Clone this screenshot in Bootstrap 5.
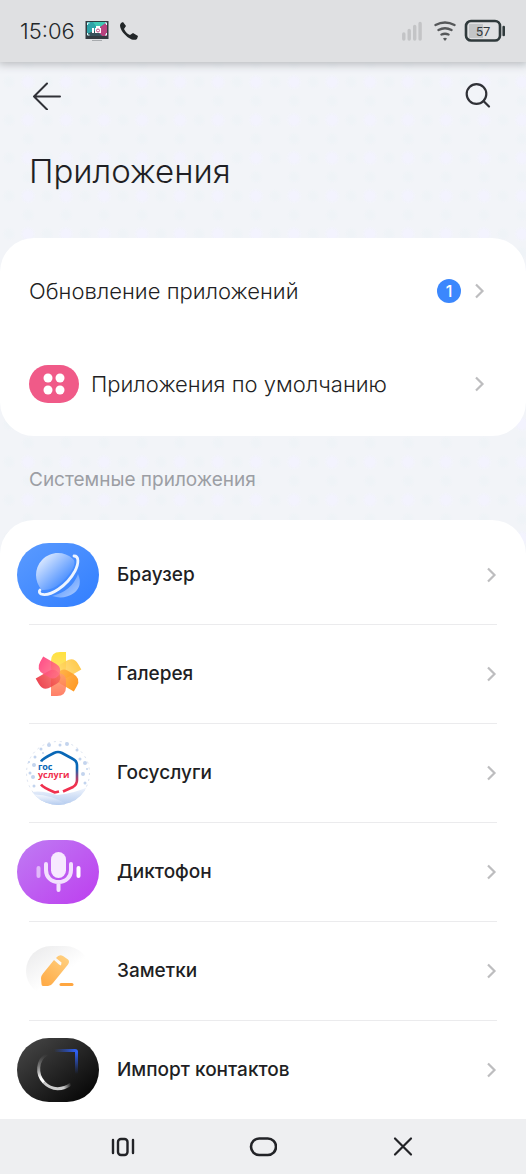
<!DOCTYPE html>
<html lang="ru">
<head>
<meta charset="utf-8">
<meta name="viewport" content="width=device-width, initial-scale=1">
<title>Приложения</title>
<link href="https://cdn.jsdelivr.net/npm/bootstrap@5.3.0/dist/css/bootstrap.min.css" rel="stylesheet">
<style>
  body {
    font-family: Inter, Roboto, "Liberation Sans", sans-serif;
    color: #1f1f24;
    background-color: #f2f4f8;
    background-image:
      radial-gradient(circle, #f3f3fe 4px, transparent 8px),
      radial-gradient(circle, #eff3f7 3px, transparent 7px),
      radial-gradient(circle, #eff3f7 3px, transparent 7px);
    background-size: 38px 38px;
    background-position: 9px 63px, 9px 82px, 28px 63px;
  }
  svg { display: block; flex-shrink: 0; }
  a { color: inherit; text-decoration: none; }
  button { background: none; border: 0; padding: 0; color: inherit; }
  .status-bar { height: 62px; padding: 0 20px; background: #dfe0e2; box-shadow: 0 0 9px 2px #b4b6b9; }
  .clock { font-size: 22px; line-height: 28px; font-weight: 300; color: #24282a; margin-right: 2px; }
  .top-bar { padding: 20px 34px 0 32px; }
  .page-title { font-size: 33px; line-height: 44px; font-weight: 300; padding: 0 29px; margin: 39px 0 45px; }
  .panel { background: #fff; border-radius: 34px; }
  .links { padding: 6px 0; }
  .panel-row { height: 93px; padding: 0 40px 0 29px; font-size: 22px; line-height: 28px; font-weight: 300; }
  .count { width: 24px; height: 24px; border-radius: 12px; background: #3b87fd; color: #fff; font-size: 16px; line-height: 24px; font-weight: 500; margin-right: 13px; }
  .section-label { font-size: 19px; line-height: 28px; font-weight: 400; color: #9c9ea4; padding: 0 29px; margin: 30px 0 26px; }
  .apps { border-radius: 34px 34px 0 0; padding: 6px 29px 0; }
  .app-item + .app-item { border-top: 1px solid #ebebed; }
  .app-row { height: 98px; font-size: 19px; line-height: 28px; font-weight: 500; }
  .app-icon { margin: 0 18px 0 -12px; }
  .nav-keys { height: 55px; background: #eeeff1; padding: 0 53px; color: #222327; }
</style>
</head>
<body>
<div class="d-flex flex-column min-vh-100">
  <header class="status-bar d-flex align-items-center">
    <span class="clock">15:06</span>
    <svg class="ms-2" width="24" height="22" viewBox="0 0 24 22" aria-hidden="true">
      <rect x=".5" y="1" width="23" height="18" fill="#333a40"/>
      <path d="M2 2h20v14H2z" fill="#2fa3a8"/><path d="M8 2h14l-9 7z" fill="#40c8b4"/>
      <path d="M22 2v14h-5l-6-6z" fill="#b8437f"/><path d="M2 14l9-4 6 6H2z" fill="#37515a"/>
      <path d="M2.500 5V3h2M20 3h1.500v2M2.500 13v2h2M20 15h1.500v-2" stroke="#dff" fill="none"/>
      <path d="M7 8h2v5H7zM10 8h1V6h4v2h1v5h-6z" fill="#fff"/><circle cx="13" cy="10.500" r="1.500" fill="none" stroke="#c54884"/>
      <path d="M7 20.500h10" stroke="#a8abae"/>
    </svg>
    <svg class="ms-2" width="24" height="22" viewBox="0 0 24 22" aria-hidden="true"><path d="M4 3l2-1 3 4-2 3c2 4 4 5 6 6l3-2 5 3-1 3c-2 1.500-5 1-8-1C8 15.500 3 10 3 5z" fill="#222628"/></svg>
    <svg class="ms-auto" width="20" height="22" viewBox="0 0 20 22" stroke="#c3c4c6" stroke-width="3.400" stroke-linecap="round" aria-hidden="true"><path d="M1.800 14V19M7.200 10.500V19M12.700 6.500V19M18.100 3.500V19"/></svg>
    <svg class="ms-2 me-1" width="30" height="24" viewBox="0 0 30 24" fill="none" stroke="#56585a" stroke-width="2.400" stroke-linecap="round" aria-hidden="true"><path d="M5.500 6q9.500-5 19 0M8.500 11q6.500-3.500 13 0M11.500 15.500q3.500-1.500 7 0"/><path d="M13 19.500q2-1.500 4 0L15 22z" fill="#56585a" stroke="none"/></svg>
    <svg width="42" height="24" viewBox="0 0 42 24" aria-label="57%"><rect x="2" y="2" width="34" height="19.500" rx="5" fill="#e0e1e3" stroke="#303a3c" stroke-width="2.600"/><path d="M5 5h14v14H5z" fill="#c3c5c7"/><path d="M39.700 8v8" stroke="#303a3c" stroke-width="2.600" stroke-linecap="round"/><text x="19" y="16.500" text-anchor="middle" font-family="Roboto" font-size="13" font-weight="400" fill="#333a3d">57</text></svg>
  </header>

  <nav class="top-bar d-flex justify-content-between align-items-center" aria-label="Верхняя панель">
    <button type="button" aria-label="Назад"><svg width="30" height="28" viewBox="0 0 30 28" fill="none" stroke="#303137" stroke-width="2" stroke-linecap="round" stroke-linejoin="round"><path d="M15 1.500L2 14.500l13 13M2 14.500h26"/></svg></button>
    <button type="button" aria-label="Поиск"><svg width="28" height="28" viewBox="0 0 28 28" fill="none" stroke="#303137" stroke-width="2.200" stroke-linecap="round"><circle cx="12.500" cy="12" r="9.800"/><path d="M19.500 19l5.500 5.500"/></svg></button>
  </nav>
  <h1 class="page-title">Приложения</h1>

  <section class="panel links">
    <a href="#updates" class="panel-row d-flex align-items-center">
      <span class="me-auto">Обновление приложений</span><span class="count text-center">1</span>
      <svg width="12" height="16" viewBox="0 0 12 16" fill="none" stroke="#bdbdbf" stroke-width="2.200"><path d="M2 1.500L8.500 8 2 14.500"/></svg>
    </a>
    <a href="#defaults" class="panel-row d-flex align-items-center">
      <svg width="50" height="38" viewBox="0 0 50 38" aria-hidden="true"><rect width="50" height="38" rx="19" fill="#f05a88"/><g fill="#fff"><circle cx="19" cy="13" r="4.500"/><circle cx="31" cy="13" r="4.500"/><circle cx="19" cy="25" r="4.500"/><circle cx="31" cy="25" r="4.500"/></g></svg>
      <span class="me-auto ps-2 ms-1">Приложения по умолчанию</span>
      <svg width="12" height="16" viewBox="0 0 12 16" fill="none" stroke="#bdbdbf" stroke-width="2.200"><path d="M2 1.500L8.500 8 2 14.500"/></svg>
    </a>
  </section>

  <h2 class="section-label">Системные приложения</h2>

  <ul class="panel apps list-unstyled mb-0 flex-grow-1">
    <li class="app-item"><a href="#browser" class="app-row d-flex align-items-center">
      <svg class="app-icon" width="82" height="64" viewBox="0 0 82 64" aria-hidden="true">
        <defs><linearGradient id="bl" x2="1" y2="1"><stop stop-color="#5b9bff"/><stop offset="1" stop-color="#317eff"/></linearGradient><linearGradient id="pl" x1=".1" y1=".1" x2=".75" y2=".75"><stop stop-color="#e5efff"/><stop offset="1" stop-color="#4e91ff"/></linearGradient><linearGradient id="pr" x1="1" y1="1" x2="0" y2="0"><stop stop-color="#b0cfff"/><stop offset="1" stop-color="#3d84ff"/></linearGradient></defs>
        <rect width="82" height="64" rx="32" fill="url(#bl)"/>
        <path d="M35 53Q55 48 61 31Q66 43 57 50Q47 57 35 53" fill="url(#pr)"/>
        <path d="M25 47C17 39 17 25 25 17C34 8 47 8 56 16C60 19 56 29 45 39Q35 48 25 47" fill="url(#pl)"/>
        <path d="M57 13C62 13 62 20 58 28C50 43 33 54 24 51C22 50 22 48 23 47" fill="none" stroke="#edf4ff" stroke-width="2.800" stroke-linecap="round"/>
      </svg>
      <span class="me-auto">Браузер</span>
      <svg width="12" height="16" viewBox="0 0 12 16" fill="none" stroke="#bdbdbf" stroke-width="2.200"><path d="M3 1.500L9.500 8 3 14.500"/></svg>
    </a></li>
    <li class="app-item"><a href="#gallery" class="app-row d-flex align-items-center">
      <svg class="app-icon" width="82" height="64" viewBox="0 0 82 64" aria-hidden="true">
        <defs><linearGradient id="g1" y2="1" x2="0"><stop stop-color="#ffe135"/><stop offset="1" stop-color="#ffdf75"/></linearGradient><linearGradient id="g2" y2="1" x2="0"><stop stop-color="#ffbf26"/><stop offset="1" stop-color="#ffda70"/></linearGradient><linearGradient id="g3" y2="1" x2="0"><stop stop-color="#ff8a00"/><stop offset="1" stop-color="#ffac40"/></linearGradient><linearGradient id="g4" y2="1" x2="0"><stop stop-color="#ff6144"/><stop offset="1" stop-color="#ff9a66"/></linearGradient><linearGradient id="g5" y2="1" x2="0"><stop stop-color="#e91d2c"/><stop offset="1" stop-color="#f7665b"/></linearGradient><linearGradient id="g6" y2="1" x2="0"><stop stop-color="#ff2b6d"/><stop offset="1" stop-color="#ff6c83"/></linearGradient></defs>
        <g opacity=".95">
        <path d="M34 19q0-9 9-9h6v15q0 7-7.500 8q-7.500-1-7.500-7z" fill="url(#g1)"/>
        <path d="M34 19q0-9 9-9h6v15q0 7-7.500 8q-7.500-1-7.500-7z" fill="url(#g2)" fill-opacity=".85" transform="rotate(60 41.500 32)"/>
        <path d="M34 19q0-9 9-9h6v15q0 7-7.500 8q-7.500-1-7.500-7z" fill="url(#g3)" fill-opacity=".9" transform="rotate(120 41.500 32)"/>
        <path d="M34 19q0-9 9-9h6v15q0 7-7.500 8q-7.500-1-7.500-7z" fill="url(#g4)" fill-opacity=".85" transform="rotate(180 41.500 32)"/>
        <path d="M34 19q0-9 9-9h6v15q0 7-7.500 8q-7.500-1-7.500-7z" fill="url(#g5)" fill-opacity=".85" transform="rotate(240 41.500 32)"/>
        <path d="M34 19q0-9 9-9h6v15q0 7-7.500 8q-7.500-1-7.500-7z" fill="url(#g6)" fill-opacity=".85" transform="rotate(300 41.500 32)"/></g>
      </svg>
      <span class="me-auto">Галерея</span>
      <svg width="12" height="16" viewBox="0 0 12 16" fill="none" stroke="#bdbdbf" stroke-width="2.200"><path d="M3 1.500L9.500 8 3 14.500"/></svg>
    </a></li>
    <li class="app-item"><a href="#gosuslugi" class="app-row d-flex align-items-center">
      <svg class="app-icon" width="82" height="64" viewBox="0 0 82 64" aria-hidden="true">
        <defs><linearGradient id="hx" gradientUnits="userSpaceOnUse" x1="50" y1="12" x2="50" y2="50"><stop offset=".4" stop-color="#0867b6"/><stop offset=".8" stop-color="#f0304e"/></linearGradient><linearGradient id="sn" x2="0" y2="1"><stop stop-color="#f5f8fe"/><stop offset="1" stop-color="#b5ccef"/></linearGradient><clipPath id="rd"><circle cx="41" cy="32" r="32"/></clipPath></defs>
        <circle cx="41" cy="32" r="31.500" fill="#fff" stroke="#d9e1ef" stroke-dasharray="2 4"/>
        <g clip-path="url(#rd)"><path d="M9 52Q23 48 40 54Q59 52 73 45V64H9z" fill="url(#sn)"/><path d="M9 54Q31 51 51 64H9z" fill="url(#sn)"/></g>
        <g fill="#c3d4ee"><circle cx="24" cy="8" r="1.500"/><circle cx="32" cy="4" r="2"/><circle cx="43" cy="4" r="1.500"/><circle cx="50" cy="3" r="2"/><circle cx="60" cy="9" r="1.500"/><circle cx="18" cy="16" r="1.500"/><circle cx="17" cy="24" r="2"/><circle cx="13" cy="32" r="1.500"/><circle cx="16" cy="36" r="2"/><circle cx="17" cy="45" r="1.500"/><circle cx="63" cy="18" r="1.500"/><circle cx="68" cy="22" r="2"/><circle cx="66" cy="33" r="2"/><circle cx="70" cy="28" r="1"/><circle cx="68" cy="42" r="1.500"/><circle cx="26" cy="12" r="1"/><circle cx="12" cy="21" r="1"/></g>
        <path d="M24 20.500Q25 18 37 12Q41 10 45 12L56 18Q60 20 60 24.500V39Q60 43.500 56 46L46 50.500" fill="none" stroke="url(#hx)" stroke-width="2.600"/><path d="M24 43.500Q26 46.500 38 51.500L42 50.500" fill="none" stroke="#f0304e" stroke-width="2.600"/>
        <text font-family="Open Sans" font-weight="700" font-size="9"><tspan x="21" y="29" fill="#0867b6">гос</tspan><tspan x="21" y="37" fill="#f0304e">услуги</tspan></text>
      </svg>
      <span class="me-auto">Госуслуги</span>
      <svg width="12" height="16" viewBox="0 0 12 16" fill="none" stroke="#bdbdbf" stroke-width="2.200"><path d="M3 1.500L9.500 8 3 14.500"/></svg>
    </a></li>
    <li class="app-item"><a href="#recorder" class="app-row d-flex align-items-center">
      <svg class="app-icon" width="82" height="64" viewBox="0 0 82 64" aria-hidden="true">
        <defs><linearGradient id="vi" x2="1" y2="1"><stop stop-color="#bf7cf3"/><stop offset="1" stop-color="#bd3eef"/></linearGradient></defs>
        <rect width="82" height="64" rx="32" fill="url(#vi)"/>
        <rect x="34" y="12" width="15" height="26" rx="7.500" fill="#f7e9ff"/>
        <path d="M29 24v6c0 7 5 12 12.500 12S54 37 54 30v-6M41.500 43v7" fill="none" stroke="#f3e0fe" stroke-width="4" stroke-linecap="round"/>
        <path d="M21.500 28v8" stroke="#e2b9fa" stroke-width="4" stroke-linecap="round"/><path d="M61.500 28v8" stroke="#fff" stroke-width="4" stroke-linecap="round"/>
      </svg>
      <span class="me-auto">Диктофон</span>
      <svg width="12" height="16" viewBox="0 0 12 16" fill="none" stroke="#bdbdbf" stroke-width="2.200"><path d="M3 1.500L9.500 8 3 14.500"/></svg>
    </a></li>
    <li class="app-item"><a href="#notes" class="app-row d-flex align-items-center">
      <svg class="app-icon" width="82" height="64" viewBox="0 0 82 64" aria-hidden="true">
        <defs><linearGradient id="gr" x2=".7" y2=".8"><stop stop-color="#e9e9ea"/><stop offset=".75" stop-color="#fff"/></linearGradient><linearGradient id="or" x1=".9" y1="0" x2=".2" y2="1"><stop stop-color="#ffd080"/><stop offset="1" stop-color="#ffac48"/></linearGradient></defs>
        <rect x="9" y="7" width="64" height="50" rx="25" fill="url(#gr)"/>
        <path d="M39 19q3-4 7-2l5 3.500q2 2 0 5L36 44q-2 3-5 3h-5q-1.500 0-1.500-2L24 39q0-2 2-4.500L37 21l5 4.500 2 1 .5-3z" fill="url(#or)"/>
        <path d="M44 45.500h11" stroke="#ffa640" stroke-width="3" stroke-linecap="round"/>
      </svg>
      <span class="me-auto">Заметки</span>
      <svg width="12" height="16" viewBox="0 0 12 16" fill="none" stroke="#bdbdbf" stroke-width="2.200"><path d="M3 1.500L9.500 8 3 14.500"/></svg>
    </a></li>
    <li class="app-item"><a href="#import" class="app-row d-flex align-items-center">
      <svg class="app-icon" width="82" height="64" viewBox="0 0 82 64" aria-hidden="true">
        <defs><linearGradient id="bk" x2="1" y2="1"><stop stop-color="#4a4a4a"/><stop offset="1" stop-color="#000"/></linearGradient><linearGradient id="wh" gradientUnits="userSpaceOnUse" x1="46" y1="48" x2="54" y2="46"><stop stop-color="#ccc"/><stop offset="1" stop-color="#ccc" stop-opacity="0"/></linearGradient><linearGradient id="wv" gradientUnits="userSpaceOnUse" x1="0" y1="16" x2="0" y2="40"><stop stop-color="#888" stop-opacity="0"/><stop offset="1" stop-color="#fff"/></linearGradient><linearGradient id="b1" gradientUnits="userSpaceOnUse" x1="37" y1="0" x2="60" y2="0"><stop stop-color="#2858e8" stop-opacity="0"/><stop offset="1" stop-color="#2f63ff"/></linearGradient><linearGradient id="b2" gradientUnits="userSpaceOnUse" x1="0" y1="13" x2="0" y2="36"><stop stop-color="#2f63ff"/><stop offset="1" stop-color="#2858e8" stop-opacity="0"/></linearGradient></defs>
        <rect width="82" height="64" rx="32" fill="url(#bk)"/>
        <path d="M30 16C20 22 19 36 27 44.500" fill="none" stroke="url(#wv)" stroke-width="3"/><path d="M27 44.500C35 53 46 52 54 46" fill="none" stroke="url(#wh)" stroke-width="3"/>
        <path d="M37 11h21q3 0 3 3h-24z" fill="url(#b1)"/><path d="M58 14h3v22h-3z" fill="url(#b2)"/>
      </svg>
      <span class="me-auto">Импорт контактов</span>
      <svg width="12" height="16" viewBox="0 0 12 16" fill="none" stroke="#bdbdbf" stroke-width="2.200"><path d="M3 1.500L9.500 8 3 14.500"/></svg>
    </a></li>
  </ul>

  <footer class="nav-keys d-flex align-items-center">
    <button type="button" class="flex-fill d-flex justify-content-center" aria-label="Недавние"><svg width="28" height="22" viewBox="0 0 28 22" fill="none" stroke="currentColor" stroke-width="2.400" stroke-linecap="round"><path d="M4 4v13M24 4v13"/><rect x="9" y="3" width="9.500" height="16" rx="3"/></svg></button>
    <button type="button" class="flex-fill d-flex justify-content-center" aria-label="Домой"><svg width="28" height="22" viewBox="0 0 28 22" fill="none" stroke="currentColor" stroke-width="2.600"><rect x="2" y="2.500" width="25" height="16.500" rx="8.200"/></svg></button>
    <button type="button" class="flex-fill d-flex justify-content-center" aria-label="Закрыть"><svg width="28" height="22" viewBox="0 0 28 22" fill="none" stroke="currentColor" stroke-width="2.200" stroke-linecap="round"><path d="M6 2.500l16 16M22 2.500l-16 16"/></svg></button>
  </footer>
</div>
<script src="https://cdn.jsdelivr.net/npm/bootstrap@5.3.0/dist/js/bootstrap.bundle.min.js"></script>
</body>
</html>
